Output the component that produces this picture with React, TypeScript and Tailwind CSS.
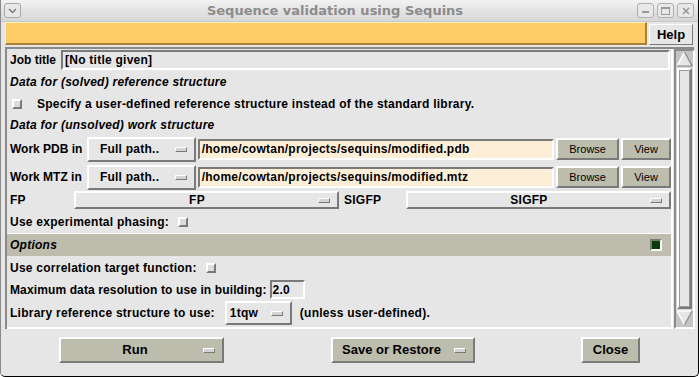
import React from "react";

const RAISED = "border-t-white border-l-white border-b-[#7a7a7a] border-r-[#7a7a7a]";
const SUNKEN = "border-t-[#7a7a7a] border-l-[#7a7a7a] border-b-white border-r-white";

function Indicator({ className = "" }: { className?: string }) {
  return <div className={`w-[12px] h-[5px] border ${RAISED} bg-[#d4d4d4] ${className}`} />;
}

function MenuButton({
  label,
  className = "",
  center = false,
}: {
  label: string;
  className?: string;
  center?: boolean;
}) {
  return (
    <div className={`relative flex items-center border-2 ${RAISED} bg-[#e6e6e6] ${className}`}>
      <span className={center ? "flex-1 text-center" : "flex-1 pl-[11px]"}>{label}</span>
      <Indicator className="mr-[7px]" />
    </div>
  );
}

function Check({ className = "" }: { className?: string }) {
  return <div className={`w-[10px] h-[10px] border-2 ${RAISED} bg-[#dcdcdc] ${className}`} />;
}

function Row({ h, className = "", children }: { h: string; className?: string; children?: React.ReactNode }) {
  return <div className={`flex items-center ${h} ${className}`}>{children}</div>;
}

export default function App() {
  return (
    <div
      className="w-[699px] h-[377px] bg-[#e6e6e6] overflow-hidden border-l border-l-[#8a8a8a] border-r border-b border-r-black border-b-black rounded-b-[5px] flex flex-col text-[12px] font-bold text-black tracking-[0.25px]"
      style={{ fontFamily: '"Liberation Sans", Arial, sans-serif' }}
    >
      {/* Title bar */}
      <div className="h-[22px] flex items-center bg-gradient-to-b from-[#f2f2f2] to-[#d6d6d6] border-b border-b-[#c8c8c8] tracking-normal">
        <div className="ml-[3px] w-[17px] h-[15px] rounded-[3px] border border-[#a8a8a8] bg-[#e8e8e8] flex items-center justify-center">
          <svg width="9" height="6" viewBox="0 0 9 6">
            <path d="M1 1 L4.5 4.5 L8 1" stroke="#777" strokeWidth="1.4" fill="none" />
          </svg>
        </div>
        <div
          className="flex-1 text-center text-[13px] font-bold text-[#8c8c8c] pl-[12px]"
          style={{ fontFamily: '"DejaVu Sans", sans-serif' }}
        >
          Sequence validation using Sequins
        </div>
        <div className="flex gap-[3px] mr-[4px]">
          <div className="w-[17px] h-[15px] rounded-[3px] border border-[#b0b0b0] bg-[#e8e8e8] flex items-end justify-center pb-[4px]">
            <div className="w-[7px] h-[2px] bg-[#999]" />
          </div>
          <div className="w-[17px] h-[15px] rounded-[3px] border border-[#b0b0b0] bg-[#e8e8e8] flex items-center justify-center">
            <div className="w-[9px] h-[8px] border border-[#999] border-t-2" />
          </div>
          <div className="w-[17px] h-[15px] rounded-[3px] border border-[#b0b0b0] bg-[#e8e8e8] flex items-center justify-center">
            <svg width="8" height="8" viewBox="0 0 8 8">
              <path d="M1 1 L7 7 M7 1 L1 7" stroke="#999" strokeWidth="1.6" />
            </svg>
          </div>
        </div>
      </div>

      {/* Yellow bar + Help */}
      <div className="flex h-[24px] pl-[4px] pr-[5px]">
        <div className="flex-1 h-[23px] bg-[#fecb66] border-t border-l border-t-[#fff3c0] border-l-[#fff3c0] border-b-2 border-r-2 border-b-[#a8823c] border-r-[#a8823c]" />
        <div className={`ml-[2px] mt-[2px] w-[44px] h-[21px] border ${RAISED} bg-[#e6e6e6] flex items-center justify-center text-[13px] tracking-normal`}>
          Help
        </div>
      </div>

      {/* Panel */}
      <div className="ml-[4px] mr-[4px] mt-[1px] h-[282px] flex border-t-2 border-l-2 border-t-[#8a8a8a] border-l-[#8a8a8a]">
        <div className="w-[666px] flex flex-col border-r-2 border-b-2 border-r-white border-b-white">
          {/* Job title */}
          <Row h="h-[21px]" className="pl-[3px]">
            <span className="tracking-normal">Job title</span>
            <div className={`ml-[5px] flex-1 h-[20px] border-2 ${SUNKEN} flex items-center pl-[2px] mr-[1px] font-bold`}>
              [No title given]
            </div>
          </Row>
          <Row h="h-[23px]" className="pl-[3px] italic">Data for (solved) reference structure</Row>
          <Row h="h-[22px]" className="pl-[5px]">
            <Check />
            <span className="ml-[15px]">Specify a user-defined reference structure instead of the standard library.</span>
          </Row>
          <Row h="h-[20px]" className="pl-[3px] italic">Data for (unsolved) work structure</Row>
          {/* Work PDB */}
          <Row h="h-[28px]" className="pl-[3px]">
            <span className="w-[77px] tracking-normal">Work PDB in</span>
            <MenuButton label="Full path.." className="w-[109px] h-[25px]" />
            <div className={`ml-[2px] w-[357px] h-[21px] border-2 ${SUNKEN} bg-[#fdefd7] flex items-center pl-[2px]`}>
              /home/cowtan/projects/sequins/modified.pdb
            </div>
            <div className={`ml-[2px] w-[63px] h-[22px] border-2 ${RAISED} bg-[#bdbdad] flex items-center justify-center font-normal text-[11px] tracking-normal`}>
              Browse
            </div>
            <div className={`ml-[2px] w-[50px] h-[22px] border-2 ${RAISED} bg-[#bdbdad] flex items-center justify-center font-normal text-[11px] tracking-normal`}>
              View
            </div>
          </Row>
          {/* Work MTZ */}
          <Row h="h-[28px]" className="pl-[3px]">
            <span className="w-[77px] tracking-normal">Work MTZ in</span>
            <MenuButton label="Full path.." className="w-[109px] h-[25px]" />
            <div className={`ml-[2px] w-[357px] h-[21px] border-2 ${SUNKEN} bg-[#fdefd7] flex items-center pl-[2px]`}>
              /home/cowtan/projects/sequins/modified.mtz
            </div>
            <div className={`ml-[2px] w-[63px] h-[22px] border-2 ${RAISED} bg-[#bdbdad] flex items-center justify-center font-normal text-[11px] tracking-normal`}>
              Browse
            </div>
            <div className={`ml-[2px] w-[50px] h-[22px] border-2 ${RAISED} bg-[#bdbdad] flex items-center justify-center font-normal text-[11px] tracking-normal`}>
              View
            </div>
          </Row>
          {/* FP */}
          <Row h="h-[19px]" className="pl-[3px] items-start">
            <span className="w-[64px] leading-[18px]">FP</span>
            <MenuButton label="FP" center className="w-[265px] h-[18px]" />
            <span className="ml-[5px] w-[62px] leading-[18px]">SIGFP</span>
            <MenuButton label="SIGFP" center className="w-[265px] h-[18px]" />
          </Row>
          <Row h="h-[23px]" className="pl-[3px]">
            <span>Use experimental phasing:</span>
            <Check className="ml-[9px]" />
          </Row>
          {/* Options bar */}
          <div className="h-[1px] bg-white" />
          <div className="h-[22px] bg-[#bebdad] flex items-center pl-[3px] italic">
            <span className="flex-1">Options</span>
            <div className="mr-[9px] w-[12px] h-[12px] border-2 border-t-[#7a7a7a] border-l-[#7a7a7a] border-b-white border-r-white bg-[#0b3a0b]" />
          </div>
          <Row h="h-[23px]" className="pl-[3px]">
            <span>Use correlation target function:</span>
            <Check className="ml-[9px]" />
          </Row>
          <Row h="h-[21px]" className="pl-[3px]">
            <span className="tracking-[0.12px]">Maximum data resolution to use in building:</span>
            <div className={`ml-[3px] w-[35px] h-[19px] border-2 ${SUNKEN} flex items-center pl-[1px]`}>2.0</div>
          </Row>
          <Row h="h-[26px]" className="pl-[3px]">
            <span>Library reference structure to use:</span>
            <MenuButton label="1tqw" className="ml-[10px] w-[67px] h-[24px] [&>span]:pl-[3px]" />
            <span className="ml-[8px]">(unless user-defined).</span>
          </Row>
        </div>
        {/* Scrollbar */}
        <div className="ml-[1px] w-[21px] h-[280px] border-2 border-t-[#8a8a8a] border-l-[#8a8a8a] border-b-white border-r-white bg-[#dcdcdc] flex flex-col">
          <svg width="17" height="16" viewBox="0 0 17 16" className="block">
            <rect x="0" y="0" width="17" height="16" fill="#c4c4c4" />
            <path d="M8.5 1 L1 15 L16 15 Z" fill="#e6e6e6" />
            <path d="M8.5 1 L1 15" stroke="#ffffff" strokeWidth="1.5" />
            <path d="M8.5 1 L16 15 L1 15" stroke="#8a8a8a" strokeWidth="1.2" fill="none" />
          </svg>
          <div className={`mx-[1px] mt-[1px] flex-1 border-2 ${RAISED} bg-[#e6e6e6]`}>
            <div className="w-full h-full border border-t-[#9a9a9a] border-l-[#9a9a9a] border-b-[#9a9a9a] border-r-[#9a9a9a]" />
          </div>
          <svg width="17" height="17" viewBox="0 0 17 17" className="block mt-[1px]">
            <rect x="0" y="0" width="17" height="17" fill="#c4c4c4" />
            <path d="M1 1 L16 1 L8.5 15 Z" fill="#e6e6e6" />
            <path d="M1 1 L16 1 M1 1 L8.5 15" stroke="#ffffff" strokeWidth="1.4" />
            <path d="M16 1 L8.5 15" stroke="#8a8a8a" strokeWidth="1.2" />
          </svg>
        </div>
      </div>

      {/* Bottom buttons */}
      <div className="flex mt-[8px] h-[26px] tracking-normal">
        <div className={`ml-[58px] w-[165px] h-[26px] border-2 ${RAISED} bg-[#bdbdad] flex items-center`}>
          <span className="flex-1 text-center text-[13px] pl-[6px]">Run</span>
          <Indicator className="mr-[7px]" />
        </div>
        <div className={`ml-[107px] w-[144px] h-[26px] border-2 ${RAISED} bg-[#bdbdad] flex items-center`}>
          <span className="flex-1 pl-[9px] text-[13px]">Save or Restore</span>
          <Indicator className="mr-[7px]" />
        </div>
        <div className={`ml-[106px] w-[59px] h-[26px] border-2 ${RAISED} bg-[#bdbdad] flex items-center justify-center text-[13px]`}>
          Close
        </div>
      </div>
    </div>
  );
}
